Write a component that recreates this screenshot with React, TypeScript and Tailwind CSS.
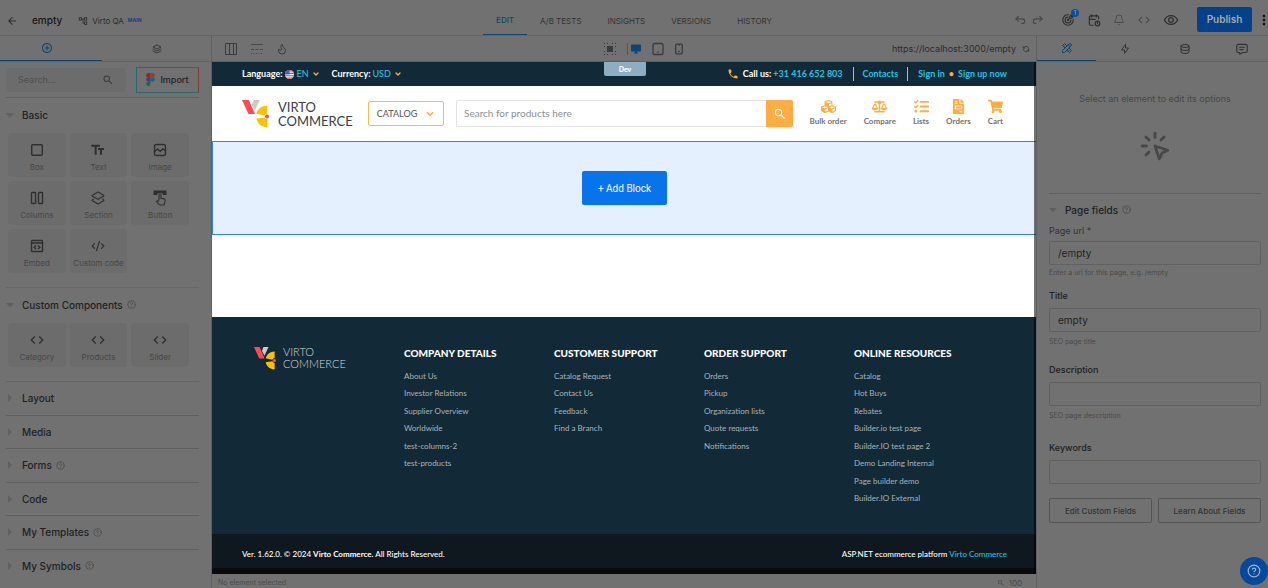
import React from "react";
import {
  MdArrowBack,
  MdOutlineAccountTree,
  MdAddCircleOutline,
  MdSearch,
  MdFormatSize,
  MdOutlineRemoveRedEye,
  MdMoreVert,
  MdDesktopWindows,
  MdPhone,
  MdZoomOut,
  MdCode,
} from "react-icons/md";
import { FaBalanceScale, FaCubes, FaFileInvoice, FaShoppingCart, FaTasks } from "react-icons/fa";
import {
  TbArrowBackUp,
  TbArrowForwardUp,
  TbTools,
  TbBolt,
  TbDatabase,
  TbClick,
  TbMessage,
  TbStack2,
  TbTargetArrow,
  TbCalendarClock,
  TbRefresh,
} from "react-icons/tb";
import { Bell, ChevronDown, CircleHelp, CodeXml, Flame, Layers2 } from "lucide-react";

const tabs = ["EDIT", "A/B TESTS", "INSIGHTS", "VERSIONS", "HISTORY"];

function ImageIcon() {
  return (
    <svg viewBox="0 0 16 16" className="size-4" fill="none" stroke="currentColor" strokeWidth="1.4">
      <rect x="2.5" y="2.5" width="11" height="11" rx="2" />
      <path d="M2.5 9.5 5.7 7l2.5 2.4 2.6-2.6 2.7 1.8" />
    </svg>
  );
}

function ColumnsIcon() {
  return (
    <svg viewBox="0 0 16 16" className="size-4" fill="none" stroke="currentColor" strokeWidth="1.4">
      <rect x="2.5" y="2.5" width="4" height="11" rx="0.6" />
      <rect x="9.5" y="2.5" width="4" height="11" rx="0.6" />
    </svg>
  );
}

function EmbedIcon() {
  return (
    <svg viewBox="0 0 16 16" className="size-4" fill="none" stroke="currentColor" strokeWidth="1.4">
      <rect x="2.5" y="2.5" width="11" height="11" rx="0.8" />
      <path d="M2.5 5h11M7 7.5 5.2 9.2 7 11M9 7.5l1.8 1.7L9 11" />
    </svg>
  );
}

function BoxIcon() {
  return (
    <svg viewBox="0 0 16 16" className="size-4" fill="none" stroke="currentColor" strokeWidth="1.4">
      <rect x="2.7" y="2.7" width="10.6" height="10.6" rx="1" />
    </svg>
  );
}

function ButtonIcon() {
  return (
    <svg viewBox="0 0 16 16" className="size-4" fill="none" stroke="currentColor" strokeWidth="1.1">
      <path d="M1.5.5h13v4.6h-3.2A3.3 3.3 0 0 0 5 5.1H1.5z" fill="currentColor" stroke="none" />
      <path d="M7 10.6V4.8a1 1 0 0 1 2 0v3.400l3.200.7c.8.2 1 .8.9 1.500l-.5 3.200c-.1.800-.6 1.400-1.400 1.400H8.300c-.6 0-.9-.2-1.300-.6L4.300 11.500c.6-.9 1.600-.8 2.700-.2" />
    </svg>
  );
}

function FigmaIcon() {
  return (
    <svg viewBox="0 0 12 18" className="h-[13px] w-[9px]">
      <path d="M3 0h3v6H3a3 3 0 0 1 0-6z" fill="#8c2c16" />
      <path d="M6 0h3a3 3 0 0 1 0 6H6z" fill="#8c4438" />
      <path d="M3 6h3v6H3a3 3 0 0 1 0-6z" fill="#5a308c" />
      <circle cx="9" cy="9" r="3" fill="#0f668c" />
      <path d="M3 12h3v3a3 3 0 1 1-3-3z" fill="#087344" />
    </svg>
  );
}

function LogoMark({ className }: { className: string }) {
  return (
    <svg viewBox="0 0 27 28" className={className}>
      <path d="M11.500 0h6.300l-4.900 10.500-3.100-5.800z" fill="#c9cbcc" />
      <path d="M0 0h6.800l6.200 14H6.500z" fill="#ff4a52" />
      <path d="M25.300 5.400v8.100c-1.500.3-2.300 1.200-2.700 2l-8.200-1.700c1-4.800 5.100-8.300 10.900-8.400z" fill="#ffc107" />
      <path d="M14.400 18.500l8.200-1c.4 1 1.300 1.800 2.700 2v7.700c-5.800-.1-9.900-3.700-10.900-8.700z" fill="#ffc107" />
      <circle cx="25" cy="16.500" r="2" fill="#ff4a52" />
    </svg>
  );
}

function Help() {
  return <CircleHelp className="size-[9px] text-[#4a4a4a]" strokeWidth={2} aria-label="Help" />;
}

function Tile({ label, children }: { label: string; children: React.ReactNode }) {
  return (
    <button className="flex h-11 flex-col items-center justify-center gap-1 rounded-sm bg-[#6c6c6c] pt-1 text-[#2f2f2f]">
      <span className="flex h-4 items-center">{children}</span>
      <span className="text-[8px] leading-[10px] whitespace-nowrap text-[#474747]">{label}</span>
    </button>
  );
}

function Section({ label, help, open }: { label: string; help?: boolean; open?: boolean }) {
  return (
    <button className="flex w-full items-center text-left text-[10px] leading-4 font-medium text-[#202224]">
      <svg viewBox="0 0 8 8" className="mr-2 size-2 text-[#606060]" fill="currentColor">
        {open ? <path d="M0 2h8L4 6.500z" /> : <path d="M2 0v8l4-4z" />}
      </svg>
      {label}
      {help && (
        <span className="ml-1">
          <Help />
        </span>
      )}
    </button>
  );
}

function LeftPanel() {
  return (
    <aside className="flex flex-col border-r border-[#606060]">
      <div className="grid h-[26px] grid-cols-[102px_1fr] border-b border-[#636363]">
        <button aria-label="Insert" className="flex items-center justify-center border-b border-[#0d4672] pr-2 text-[#0d4672]">
          <MdAddCircleOutline className="size-3" />
        </button>
        <button aria-label="Layers" className="flex items-center justify-center text-[#3b3b3b]">
          <TbStack2 className="size-3" />
        </button>
      </div>
      <div className="flex flex-1 flex-col pr-3 pl-1.5">
        <div className="flex h-9 items-center justify-between border-b border-[#5f5f5f]">
          <label className="flex h-6 w-[120px] items-center rounded-sm bg-[#6c6c6c] px-3 text-[#3b3b3b]">
            <input aria-label="Search" placeholder="Search..." className="w-full min-w-0 text-[9px] outline-none placeholder:text-[#505050]" />
            <MdSearch className="size-3 shrink-0" />
          </label>
          <button className="flex h-[26px] w-[63px] items-center justify-center gap-[5px] border border-t-[#2f6970] border-r-[#7d3e33] border-b-[#2f6970] border-l-[#2b6a70] text-[9px] font-medium text-[#222]">
            <FigmaIcon />
            Import
          </button>
        </div>
        <section className="border-b border-[#666] pb-3.5">
          <div className="flex h-[35px] items-center pb-0.5">
            <Section label="Basic" open />
          </div>
          <div className="mr-2.5 ml-0.5 grid grid-cols-3 gap-1">
            <Tile label="Box"><BoxIcon /></Tile>
            <Tile label="Text"><MdFormatSize className="size-4 -scale-x-100" /></Tile>
            <Tile label="Image"><ImageIcon /></Tile>
            <Tile label="Columns"><ColumnsIcon /></Tile>
            <Tile label="Section"><Layers2 className="size-3.5" /></Tile>
            <Tile label="Button"><ButtonIcon /></Tile>
            <Tile label="Embed"><EmbedIcon /></Tile>
            <Tile label="Custom code"><CodeXml className="size-3.5" /></Tile>
          </div>
        </section>
        <section className="border-b border-[#666] pb-3.5">
          <div className="flex h-[35px] items-center pb-0.5">
            <Section label="Custom Components" open help />
          </div>
          <div className="mr-2.5 ml-0.5 grid grid-cols-3 gap-1">
            <Tile label="Category"><MdCode className="size-4" /></Tile>
            <Tile label="Products"><MdCode className="size-4" /></Tile>
            <Tile label="Slider"><MdCode className="size-4" /></Tile>
          </div>
        </section>
        <div className="flex flex-1 flex-col divide-y divide-[#5f5f5f] pb-1.5">
          {[
            { label: "Layout" },
            { label: "Media" },
            { label: "Forms", help: true },
            { label: "Code" },
            { label: "My Templates", help: true },
            { label: "My Symbols", help: true },
          ].map((s) => (
            <div key={s.label} className="flex flex-1 items-center">
              <Section label={s.label} help={s.help} />
            </div>
          ))}
        </div>
      </div>
    </aside>
  );
}

const footerColumns = [
  { title: "COMPANY DETAILS", links: ["About Us", "Investor Relations", "Supplier Overview", "Worldwide", "test-columns-2", "test-products"] },
  { title: "CUSTOMER SUPPORT", links: ["Catalog Request", "Contact Us", "Feedback", "Find a Branch"] },
  { title: "ORDER SUPPORT", links: ["Orders", "Pickup", "Organization lists", "Quote requests", "Notifications"] },
  {
    title: "ONLINE RESOURCES",
    links: ["Catalog", "Hot Buys", "Rebates", "Builder.io test page", "Builder.IO test page 2", "Demo Landing Internal", "Page builder demo", "Builder.IO External"],
  },
];

const shopLinks = [
  { label: "Bulk order", Icon: FaCubes },
  { label: "Compare", Icon: FaBalanceScale },
  { label: "Lists", Icon: FaTasks },
  { label: "Orders", Icon: FaFileInvoice },
  { label: "Cart", Icon: FaShoppingCart },
];

function FlagIcon() {
  return (
    <svg viewBox="0 0 10 10" className="size-[9px]">
      <clipPath id="flag">
        <circle cx="5" cy="5" r="5" />
      </clipPath>
      <g clipPath="url(#flag)">
        <rect width="10" height="10" fill="#f4f4f4" />
        <path d="M0 1h10M0 3.700h10M0 6.400h10M0 9.100h10" stroke="#e2404d" strokeWidth="1.300" />
        <rect width="5" height="5" fill="#3c62b0" />
      </g>
    </svg>
  );
}

function Storefront() {
  return (
    <div className="relative flex flex-1 flex-col bg-white font-['Lato',sans-serif]">
      <div className="flex h-6 items-center justify-between bg-[#122a37] pr-[29px] pl-[30px] text-[9px] font-bold text-white">
        <div className="flex items-center">
          Language:
          <button className="ml-0.5 flex items-center gap-[3px] font-medium text-[#27c0e2]">
            <FlagIcon /> EN <ChevronDown className="size-2 text-[#ffad42]" strokeWidth={4} />
          </button>
          <span className="ml-3">Currency:</span>
          <button className="ml-0.5 flex items-center gap-[3px] font-medium text-[#27c0e2]">
            USD <ChevronDown className="size-2 text-[#ffad42]" strokeWidth={4} />
          </button>
        </div>
        <div className="flex items-center text-[#27c0e2]">
          <MdPhone className="mr-1 size-3 text-[#ffad42]" />
          <span className="mr-0.5 text-white">Call us:</span>
          <a href="#call">+31 416 652 803</a>
          <a href="#contacts" className="ml-2.5 border-x border-[#ffad42] px-[9px]">Contacts</a>
          <a href="#signin" className="ml-2.5">Sign in</a>
          <span className="mx-1 text-[#ffad42]">•</span>
          <a href="#signup">Sign up now</a>
        </div>
      </div>
      <div className="flex h-[55px] items-center pr-[29px] pl-[30px]">
        <a href="#home" className="flex w-[126px] items-center gap-[9px] text-[13px] leading-[14px] font-normal text-[#3a4046]">
          <LogoMark className="h-7 w-[27px] shrink-0" />
          <span>VIRTO<br />COMMERCE</span>
        </a>
        <button className="flex h-[25px] w-[76px] items-center justify-center gap-2 rounded-xs border border-[#f5b95f] text-[9px] font-medium text-[#5f5f5f]">
          CATALOG <ChevronDown className="size-2.5 text-[#ffad42]" strokeWidth={4} />
        </button>
        <form className="ml-3 flex h-[27px] flex-1">
          <input aria-label="Search for products here" placeholder="Search for products here" className="min-w-0 flex-1 rounded-l-xs border border-r-0 border-[#e3e3e3] px-[7px] text-[10px] outline-none placeholder:text-[#8b8f95]" />
          <button type="button" aria-label="Search" className="flex w-[27px] items-center justify-center rounded-r-xs bg-[#ffad42] text-white">
            <MdSearch className="size-3.5" />
          </button>
        </form>
        <nav className="mr-1 ml-4 flex gap-[17px] pb-0.5">
          {shopLinks.map(({ label, Icon }) => (
            <a key={label} href="#shop" className="flex flex-col items-center gap-0.5 text-[8px] leading-[10px] font-bold text-[#737373]">
              <Icon className="size-[15px] text-[#ffad42]" />
              {label}
            </a>
          ))}
        </nav>
      </div>
      <div className="flex h-[94px] items-center justify-center border border-r-0 border-[#3187c9] bg-[#e4f0fd]">
        <button className="h-[34px] w-[85px] rounded-xs bg-[#0874ec] font-['Roboto',sans-serif] text-[10px] text-white">+ Add Block</button>
      </div>
      <div className="h-[82px]" />
      <footer className="flex flex-1 flex-col bg-[#122a37]">
        <div className="grid grid-cols-[150px_150px_150px_150px_1fr] px-[42px] pt-[29px]">
          <a href="#home" className="flex h-6 items-center gap-[7px] text-[11px] leading-[12px] font-light text-[#d5dadd]">
            <LogoMark className="h-[23px] w-[22px] shrink-0" />
            <span>VIRTO<br />COMMERCE</span>
          </a>
          {footerColumns.map((c) => (
            <div key={c.title}>
              <h3 className="text-[10px] leading-[14px] font-black whitespace-nowrap text-white">{c.title}</h3>
              <ul className="mt-[7px] grid h-[140px] grid-rows-8 items-center text-[8px] leading-[10px] text-[#abb2b7]">
                {c.links.map((l) => (
                  <li key={l}><a href="#link">{l}</a></li>
                ))}
              </ul>
            </div>
          ))}
        </div>
        <div className="mt-auto flex h-10 items-center justify-between border-b-6 border-[#090b0d] bg-[#10181f] pt-1.5 pr-[29px] pl-[30px] text-[8px] font-medium text-white">
          <span>Ver. 1.62.0. © 2024 <b>Virto Commerce.</b> All Rights Reserved.</span>
          <span>ASP.NET ecommerce platform <a href="#virto" className="text-[#27c0e2]">Virto Commerce</a></span>
        </div>
      </footer>
      <div className="pointer-events-none absolute inset-y-0 right-0 w-0.5 bg-black/55" />
      <span className="absolute top-0 left-1/2 -ml-[20px] flex h-3.5 w-[42px] items-center justify-center rounded-b-xs bg-[#8fadc1] text-[7px] font-black text-white">Dev</span>
    </div>
  );
}

function DeviceIcon({ className }: { className: string }) {
  return (
    <svg viewBox="0 0 12 14" className={className} fill="none" stroke="currentColor" strokeWidth="1.3">
      <rect x="1" y="1.500" width="10" height="11" rx="1.300" />
      <path d="M5.300 10h1.400" />
    </svg>
  );
}

function PhoneIcon() {
  return (
    <svg viewBox="0 0 10 12" className="h-3 w-2.5" fill="none" stroke="currentColor" strokeWidth="1.3">
      <rect x="1.700" y="1.200" width="6.600" height="9.600" rx="1.200" />
      <path d="M4 1.800h2M4.300 8.500h1.400" />
    </svg>
  );
}

function Canvas() {
  return (
    <main className="flex min-w-0 flex-col">
      <div className="grid h-[26px] grid-cols-3 items-center border-b border-[#5f5f5f] pr-1.5 pl-3 text-[#3b3b3b]">
        <div className="flex items-center gap-3">
          <svg viewBox="0 0 14 14" className="size-3.5" fill="none" stroke="currentColor">
            <path d="M1.500 1.500h11v11h-11zM5.500 1.500v11M9.500 1.500v11" />
          </svg>
          <svg viewBox="0 0 14 12" className="h-3 w-3.5 text-[#484848]" stroke="currentColor" fill="none">
            <path d="M1 1.500h12" />
            <path d="M1 6.500h12" strokeDasharray="3 1.500" />
            <path d="M1 10.500h12" strokeDasharray="1 1.500" />
          </svg>
          <Flame className="size-3" />
        </div>
        <div className="flex items-center justify-center gap-2.5 pl-[34px]">
          <svg viewBox="0 0 14 14" className="size-3.5 shrink-0" fill="currentColor">
            <rect x="4" y="4" width="6" height="6" />
            <path d="M4 1h1v1H4zM9 1h1v1H9zM4 12h1v1H4zM9 12h1v1H9zM1 4h1v1H1zM1 9h1v1H1zM12 4h1v1h-1zM12 9h1v1h-1zM1 1h1v1H1zM12 1h1v1h-1zM1 12h1v1H1zM12 12h1v1h-1z" />
          </svg>
          <span className="-mr-2 h-3 border-l border-[#585858]" />
          <MdDesktopWindows className="size-3 text-[#0d4672]" />
          <DeviceIcon className="h-3.5 w-3" />
          <PhoneIcon />
        </div>
        <div className="flex items-center justify-end gap-1.5 text-[9px] whitespace-nowrap text-[#2c2c2c]">
          https://localhost:3000/empty
          <TbRefresh className="size-2" />
        </div>
      </div>
      <Storefront />
      <div className="flex h-3.5 items-end justify-between pr-3.5 pl-1.5 text-[7px] leading-[10px] text-[#4b4b4b]">
        <span>No element selected</span>
        <span className="flex items-center gap-1 text-[8px]"><MdZoomOut className="size-2" />100</span>
      </div>
    </main>
  );
}

function Field({ label, value, hint, required }: { label: string; value?: string; hint?: string; required?: boolean }) {
  return (
    <label className={required ? "flex flex-col gap-1 text-[#333]" : "flex flex-col gap-1.5 font-medium text-[#202020]"}>
      <span className="text-[9px] leading-3">{label}</span>
      <input defaultValue={value} className="h-6 w-full rounded-xs border border-[#616161] px-2 text-[10px] font-normal text-[#222] outline-none" />
      {hint && <span className="-mt-0.5 text-[7px] leading-3 font-normal text-[#4a4a4a]">{hint}</span>}
    </label>
  );
}

function RightPanel() {
  return (
    <aside className="flex flex-col border-l border-[#606060] text-[#333]">
      <div className="grid h-[26px] grid-cols-[59fr_58fr_62fr_52fr] border-b border-[#636363]">
        <button aria-label="Options" className="flex items-center justify-center border-b border-[#0d4672] text-[#0d4672]"><TbTools className="size-3" /></button>
        <button aria-label="Data" className="flex items-center justify-center"><TbBolt className="size-3" /></button>
        <button aria-label="Content" className="flex items-center justify-center"><TbDatabase className="size-3" /></button>
        <button aria-label="Comments" className="flex items-center justify-center"><TbMessage className="size-3.5" /></button>
      </div>
      <div className="flex flex-col pr-[7px] pl-3">
        <div className="flex h-[132px] flex-col items-center gap-6 border-b border-[#5f5f5f] pt-[31px] text-[9px] leading-3 text-[#484848]">
          Select an element to edit its options
          <TbClick className="size-[34px]" />
        </div>
        <div className="flex h-[31px] items-center"><Section label="Page fields" help open /></div>
        <div className="flex flex-col">
          <Field label="Page url *" value="/empty" hint="Enter a url for this page, e.g. /empty" required />
          <div className="h-[11px]" />
          <Field label="Title" value="empty" hint="SEO page title" />
          <div className="h-4" />
          <Field label="Description" hint="SEO page description" />
          <div className="h-5" />
          <Field label="Keywords" />
        </div>
        <div className="mt-3.5 grid grid-cols-2 gap-1.5 text-[8px] font-medium">
          <button className="h-[25px] rounded-xs border border-[#555]">Edit Custom Fields</button>
          <button className="h-[25px] rounded-xs border border-[#555]">Learn About Fields</button>
        </div>
      </div>
    </aside>
  );
}

export default function App() {
  return (
    <div className="relative flex min-h-screen flex-col bg-[#717171] font-['Inter',sans-serif]">
      <header className="grid h-9 grid-cols-[1fr_auto_1fr] border-b border-[#666]">
        <div className="flex items-center pt-1.5 pl-1.5 text-[#2b2b2b]">
          <MdArrowBack className="size-3" />
          <h1 className="ml-3.5 text-[10px] font-medium text-[#181818]">empty</h1>
          <MdOutlineAccountTree className="ml-4 size-2.5" />
          <span className="ml-1 text-[8px]">Virto QA</span>
          <span className="ml-1 text-[5px] font-bold text-[#183c86]">MAIN</span>
        </div>
        <nav className="flex text-[8px]">
          {tabs.map((t, i) => (
            <button key={t} className={i === 0 ? "border-b border-[#0d4672] px-[13px] pt-1.5 font-medium text-[#0d4672]" : "px-[13px] pt-1.5 text-[#333]"}>{t}</button>
          ))}
        </nav>
        <div className="flex items-center justify-end gap-3 pt-1 pr-1 text-[#303030]">
          <span className="mr-1 flex gap-1 text-[#484848]"><TbArrowBackUp className="size-3.5" /><TbArrowForwardUp className="size-3.5" /></span>
          <span className="relative">
            <TbTargetArrow className="size-3.5" />
            <span className="absolute -top-1 -right-1 flex size-2 items-center justify-center rounded-full bg-[#0b4ea0] text-[6px] leading-none text-[#aaa]">1</span>
          </span>
          <TbCalendarClock className="size-3.5" />
          <Bell className="size-3 text-[#4b4b4b]" />
          <MdCode className="size-3.5 text-[#4b4b4b]" />
          <MdOutlineRemoveRedEye className="size-4" />
          <button className="ml-1.5 h-[25px] w-[55px] rounded-xs bg-[#04418a] text-[10px] font-semibold text-[#a9a9a9]">Publish</button>
          <MdMoreVert className="-mx-2 size-4 text-[#111]" />
        </div>
      </header>
      <div className="grid flex-1 grid-cols-[212px_1fr_232px]">
        <LeftPanel />
        <Canvas />
        <RightPanel />
      </div>
      <button aria-label="Get help" className="absolute right-0 bottom-[3px] flex size-7 items-center justify-center rounded-full bg-[#04499b] text-[#a5b5c6]">
        <CircleHelp className="size-3.5" />
      </button>
    </div>
  );
}
